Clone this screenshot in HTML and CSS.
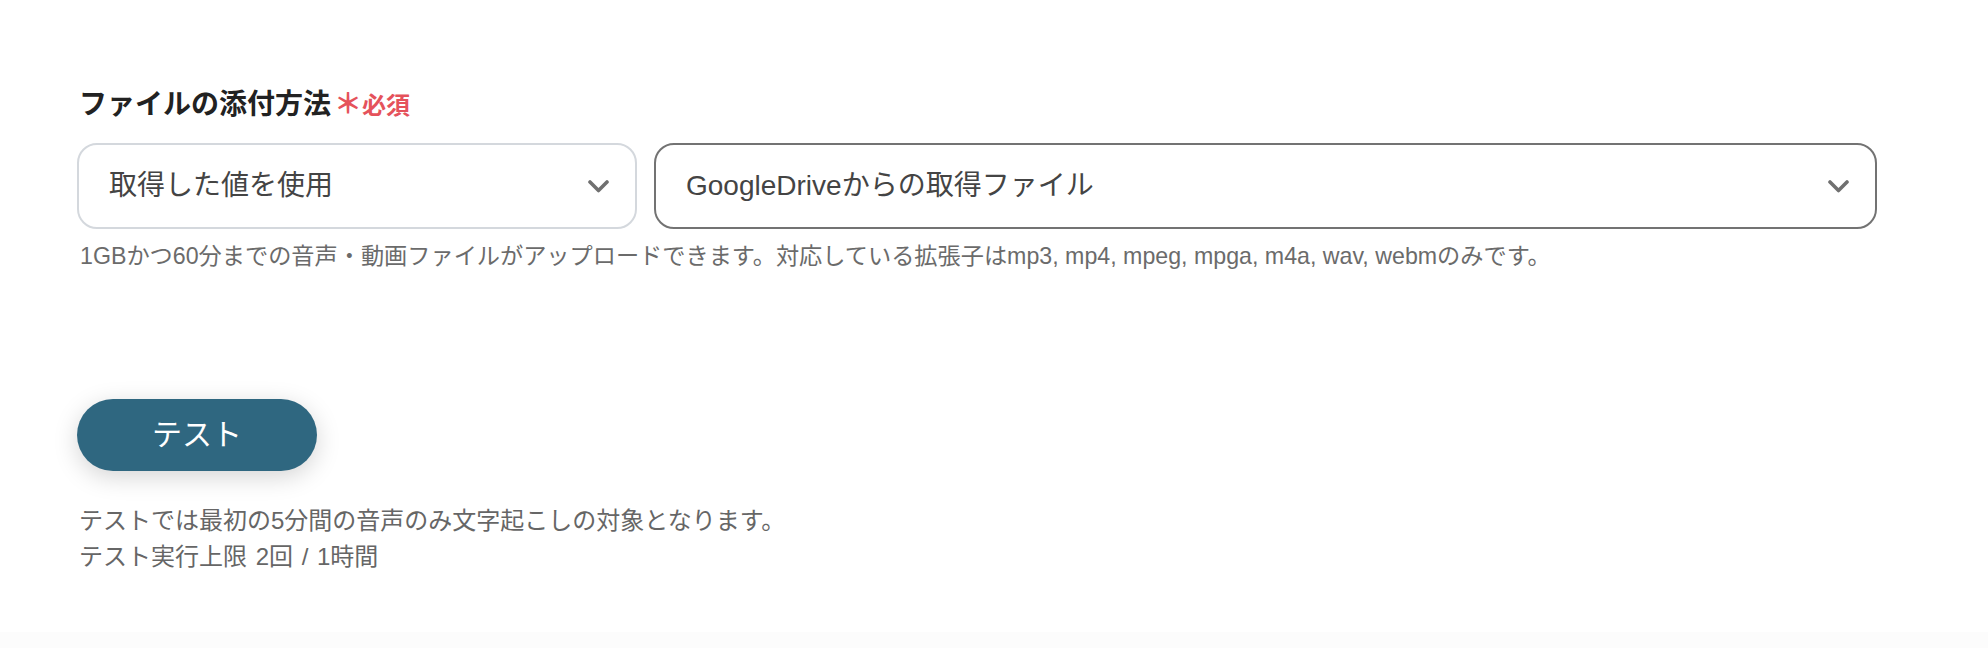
FILE: index.html
```html
<!DOCTYPE html>
<html lang="ja">
<head>
<meta charset="utf-8">
<title>ファイルの添付方法</title>
<link rel="stylesheet" href="styles.css">
</head>
<body>
<main class="page">
  <section class="field">
    <div class="field-label">ファイルの添付方法<span class="req"><span class="req-mark">＊</span>必須</span></div>
    <div class="select-row">
      <div class="select select-mode">
        <span class="select-text">取得した値を使用</span>
        <svg class="chev" width="21" height="13" viewBox="0 0 21 13"><polyline points="2,2 10.5,10.5 19,2" fill="none" stroke="#707070" stroke-width="3.6" stroke-linecap="round" stroke-linejoin="round"/></svg>
      </div>
      <div class="select select-value">
        <span class="select-text">GoogleDriveからの取得ファイル</span>
        <svg class="chev" width="21" height="13" viewBox="0 0 21 13"><polyline points="2,2 10.5,10.5 19,2" fill="none" stroke="#707070" stroke-width="3.6" stroke-linecap="round" stroke-linejoin="round"/></svg>
      </div>
    </div>
    <p class="help">1GBかつ60分までの音声・動画ファイルがアップロードできます。対応している拡張子はmp3, mp4, mpeg, mpga, m4a, wav, webmのみです。</p>
  </section>
  <button class="test-btn" type="button">テスト</button>
  <div class="notes">
    <p class="note">テストでは最初の5分間の音声のみ文字起こしの対象となります。</p>
    <p class="note word-gap">テスト実行上限 2回 / 1時間</p>
  </div>
</main>
<div class="bottom-band"></div>
</body>
</html>
```
FILE: styles.css
```css
html, body {
  margin: 0;
  padding: 0;
  background: #ffffff;
}
body {
  font-family: "Liberation Sans", "Noto Sans CJK JP", sans-serif;
  color: #333;
  height: 648px;
  overflow: hidden;
  display: flex;
  flex-direction: column;
}
.page {
  padding: 85px 0 0 77px;
  width: 1800px;
  flex: 1;
}
.field-label {
  font-size: 28px;
  line-height: 40px;
  font-weight: 700;
  color: #222;
  padding-left: 2px;
}
.req {
  color: #e5525b;
  font-size: 24px;
}
.req-mark {
  font-size: 28px;
  margin-left: 3px;
}
.select-row {
  display: flex;
  gap: 17px;
  margin-top: 17px;
}
.select {
  box-sizing: border-box;
  height: 86px;
  border-radius: 20px;
  display: flex;
  align-items: center;
  justify-content: space-between;
  padding: 0 26px 0 30px;
  background: #fff;
}
.select-mode {
  width: 560px;
  border: 2px solid #d4d8dd;
}
.select-value {
  flex: 1;
  border: 2px solid #737373;
}
.select-text {
  font-size: 28px;
  line-height: 40px;
  color: #444;
}
.chev {
  display: block;
  flex: none;
}
.help {
  margin: 10px 0 0 0;
  padding-left: 3px;
  font-size: 23.2px;
  line-height: 34px;
  color: #6b6b6b;
}
.test-btn {
  display: block;
  margin-top: 126px;
  width: 240px;
  height: 72px;
  border: none;
  border-radius: 36px;
  background: #2f6780;
  color: #fff;
  font-family: "Liberation Sans", "Noto Sans CJK JP", sans-serif;
  font-size: 30px;
  line-height: 40px;
  box-shadow: 0 6px 24px rgba(0, 0, 0, 0.17);
  padding: 0;
}
.notes {
  margin-top: 32px;
  padding-left: 2px;
}
.note {
  margin: 0;
  font-size: 24px;
  line-height: 36px;
  color: #666;
}
.word-gap {
  word-spacing: 2px;
}
.bottom-band {
  height: 16px;
  background: #fcfcfc;
  flex: none;
}
```
